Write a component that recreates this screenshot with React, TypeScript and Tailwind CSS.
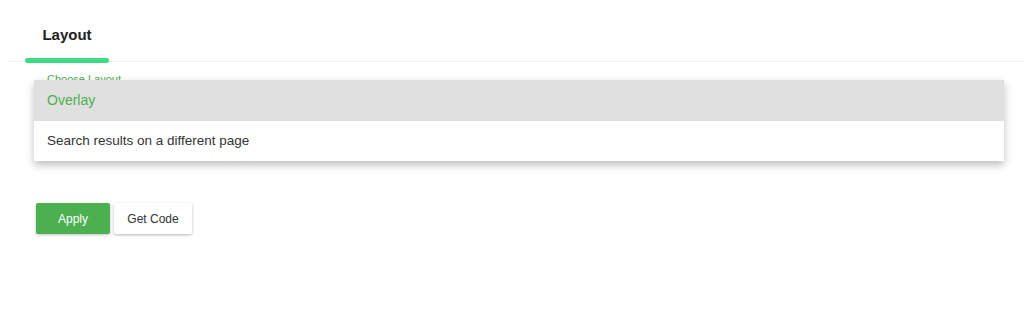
import { useState } from "react";

const options = ["Overlay", "Search results on a different page"];

const App = () => {
  const [selected, setSelected] = useState("Overlay");

  return (
    <div className="min-h-screen bg-white font-['Liberation_Sans',Arial,sans-serif] text-[#333]">
      {/* tabs */}
      <div className="ml-2 border-b border-[#eeeeee]">
        <div className="ml-[17px] flex">
          <div className="relative flex h-[61px] w-[84px] items-center justify-center pt-[9px]">
            <span className="text-[15px] font-bold text-[#222]">Layout</span>
            <div className="absolute bottom-[-2px] left-0 h-[5px] w-full rounded-full bg-[#3ddc84]" />
          </div>
        </div>
      </div>

      {/* form */}
      <div className="relative px-[34px] pt-[11px]">
        <label className="block pl-[13px] text-[11px] leading-[12px] text-[#4caf50]">Choose Layout</label>
        <div className="h-[74px]" />

        <div className="absolute left-[34px] right-[20px] top-[18px] z-10 bg-white shadow-[0_4px_8px_rgba(0,0,0,0.25)]">
          {options.map((opt) => (
            <div
              key={opt}
              onClick={() => setSelected(opt)}
              className={`flex h-[40.5px] cursor-pointer items-center px-[13px] ${
                opt === selected ? "bg-[#e0e0e0] text-[14px] text-[#4caf50]" : "bg-white text-[13.5px] text-[#333]"
              }`}
            >
              {opt}
            </div>
          ))}
        </div>

        <div className="mt-[44px] flex gap-[4px] pl-[2px]">
          <button className="h-[31px] w-[74px] rounded-[2px] bg-[#4caf50] text-[12px] text-white shadow-[0_1px_3px_rgba(0,0,0,0.25)]">
            Apply
          </button>
          <button className="h-[31px] w-[78px] rounded-[2px] bg-white text-[12px] text-[#333] shadow-[0_1px_3px_rgba(0,0,0,0.3)]">
            Get Code
          </button>
        </div>
      </div>
    </div>
  );
};

export default App;
